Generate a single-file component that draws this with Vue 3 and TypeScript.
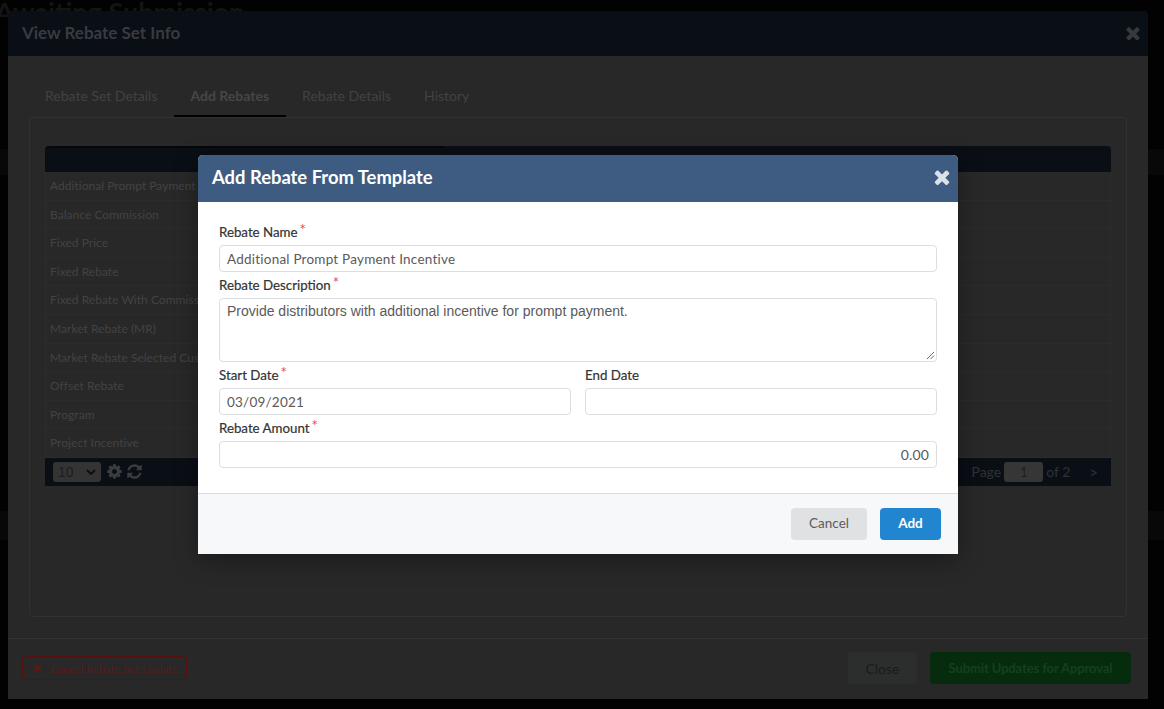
<script setup lang="ts">
const rows: string[] = [
  'Additional Prompt Payment Incentive',
  'Balance Commission',
  'Fixed Price',
  'Fixed Rebate',
  'Fixed Rebate With Commission',
  'Market Rebate (MR)',
  'Market Rebate Selected Customers',
  'Offset Rebate',
  'Program',
  'Project Incentive',
]
const timesPath =
  'M1490 1322q0 40-28 68l-136 136q-28 28-68 28t-68-28l-294-294-294 294q-28 28-68 28t-68-28l-136-136q-28-28-28-68t28-68l294-294-294-294q-28-28-28-68t28-68l136-136q28-28 68-28t68 28l294 294 294-294q28-28 68-28t68 28l136 136q28 28 28 68t-28 68l-294 294 294 294q28 28 28 68z'
const gearPath =
  'M1152 896q0-106-75-181t-181-75-181 75-75 181 75 181 181 75 181-75 75-181zm512-109v222q0 12-8 23t-20 13l-185 28q-19 54-39 91 35 50 107 138 10 12 10 25t-9 23q-27 37-99 108t-94 71q-12 0-26-9l-138-108q-44 23-91 38-16 136-29 186-7 28-36 28h-222q-14 0-24.500-8.500t-11.500-21.500l-28-184q-49-16-90-37l-141 107q-10 9-25 9-14 0-25-11-126-114-165-168-7-10-7-23 0-12 8-23 15-21 51-66.500t54-70.500q-27-50-41-99l-183-27q-13-2-21-12.500t-8-23.500v-222q0-12 8-23t19-13l186-28q14-46 39-92-40-57-107-138-10-12-10-24 0-10 9-23 26-36 98.500-107.500t94.500-71.500q13 0 26 10l138 107q44-23 91-38 16-136 29-186 7-28 36-28h222q14 0 24.500 8.500t11.500 21.500l28 184q49 16 90 37l142-107q9-9 24-9 13 0 25 10 129 119 165 170 7 8 7 22 0 12-8 23-15 21-51 66.500t-54 70.500q26 50 41 98l183 28q13 2 21 12.500t8 23.500z'
const refreshPath =
  'M1639 1056q0 5-1 7-64 268-268 434.500t-478 166.500q-146 0-282.500-55t-243.500-157l-129 129q-19 19-45 19t-45-19-19-45v-448q0-26 19-45t45-19h448q26 0 45 19t19 45-19 45l-137 137q71 66 161 102t187 36q134 0 250-65t186-179q11-17 53-117 8-23 30-23h192q13 0 22.500 9.500t9.500 22.500zm25-800v448q0 26-19 45t-45 19h-448q-26 0-45-19t-19-45 19-45l138-138q-148-137-349-137-134 0-250 65t-186 179q-11 17-53 117-8 23-30 23h-199q-13 0-22.500-9.500t-9.500-22.500v-7q65-268 270-434.500t480-166.500q146 0 284 55.500t245 156.500l130-129q19-19 45-19t45 19 19 45z'
</script>

<template>
  <div class="page">
    <div class="behind-title">Awaiting Submission</div>
    <div class="behind-band band-a"></div>
    <div class="behind-band band-b"></div>

    <section class="outer">
      <header class="outer-head">
        <h2>View Rebate Set Info</h2>
        <svg class="outer-x" viewBox="0 0 1792 1792"><path :d="timesPath" /></svg>
      </header>
      <div class="outer-body">
        <nav class="tabs">
          <span class="tab">Rebate Set Details</span>
          <span class="tab active">Add Rebates</span>
          <span class="tab">Rebate Details</span>
          <span class="tab">History</span>
        </nav>
        <div class="card">
          <div class="grid">
            <div class="grid-head"></div>
            <div v-for="r in rows" :key="r" class="grid-row">{{ r }}</div>
            <div class="grid-foot">
              <div class="foot-left">
                <span class="pagesize">10<svg viewBox="0 0 10 6"><path d="M1 1l4 4 4-4" /></svg></span>
                <svg class="ficon gear" viewBox="0 0 1792 1792"><path :d="gearPath" /></svg>
                <svg class="ficon" viewBox="0 0 1792 1792"><path :d="refreshPath" /></svg>
              </div>
              <div class="foot-right">
                <span>Page</span><span class="pagebox">1</span><span>of 2</span><span class="next">&gt;</span>
              </div>
            </div>
          </div>
        </div>
      </div>
      <footer class="outer-foot">
        <button class="btn-cancel-set">
          <svg viewBox="0 0 1792 1792"><path :d="timesPath" /></svg><span>Cancel Rebate Set Update</span>
        </button>
        <div class="foot-actions">
          <button class="btn-close">Close</button>
          <button class="btn-submit">Submit Updates for Approval</button>
        </div>
      </footer>
    </section>

    <section class="modal">
      <header class="modal-head">
        <h3>Add Rebate From Template</h3>
        <svg class="modal-x" viewBox="0 0 1792 1792"><path :d="timesPath" /></svg>
      </header>
      <div class="modal-body">
        <label class="lbl">Rebate Name<sup>*</sup></label>
        <div class="inp">Additional Prompt Payment Incentive</div>
        <label class="lbl">Rebate Description<sup>*</sup></label>
        <div class="inp area">
          Provide distributors with additional incentive for prompt payment.
          <svg class="grip" viewBox="0 0 10 10"><path d="M9 1L1 9M9 5L5 9" /></svg>
        </div>
        <div class="two">
          <div>
            <label class="lbl">Start Date<sup>*</sup></label>
            <div class="inp">03/09/2021</div>
          </div>
          <div>
            <label class="lbl">End Date</label>
            <div class="inp"></div>
          </div>
        </div>
        <label class="lbl">Rebate Amount<sup>*</sup></label>
        <div class="inp right">0.00</div>
      </div>
      <footer class="modal-foot">
        <button class="btn-cancel">Cancel</button>
        <button class="btn-add">Add</button>
      </footer>
    </section>
  </div>
</template>

<style>
html, body { margin: 0; background: #000; overflow: hidden; }
</style>

<style scoped>
* { box-sizing: border-box; }
.page {
  position: relative;
  width: 1164px;
  height: 709px;
  background: #020202;
  overflow: hidden;
  font-family: Lato, sans-serif;
}
.behind-title {
  position: absolute;
  left: -5px;
  top: -5px;
  font-size: 27px;
  font-weight: 700;
  color: #141414;
  white-space: nowrap;
}
.behind-band { position: absolute; left: 0; width: 1164px; background: #080808; }
.band-a { top: 149px; height: 26px; }
.band-b { top: 511px; height: 29px; }

.outer {
  position: absolute;
  left: 8px;
  top: 11px;
  width: 1140px;
  height: 688px;
  display: flex;
  flex-direction: column;
  background: #282828;
  border-radius: 5px 5px 0 0;
}
.outer-head {
  height: 45px;
  flex: none;
  background: #0a0e15;
  border-radius: 5px 5px 0 0;
  display: flex;
  align-items: center;
  justify-content: space-between;
  padding: 0 5px 2px 14px;
}
.outer-head h2 { margin: 0; font-size: 17px; font-weight: 700; color: #383b40; }
.outer-x { width: 20px; height: 20px; fill: #37393c; }
.outer-body { flex: 1; padding: 61px 21px 21px; position: relative; }
.tabs { position: absolute; left: 20.5px; top: 27px; display: flex; height: 34px; }
.tab {
  padding: 0 16.5px;
  font-size: 14px;
  line-height: 26px;
  color: #424242;
  height: 34px;
}
.tab.active { color: #464646; font-weight: 700; border-bottom: 2px solid #000; }
.card {
  height: 500px;
  border: 1px solid #313131;
  border-radius: 4px;
  padding: 28px 15px 0;
}
.grid-head {
  height: 26px;
  background: linear-gradient(#05070c, #05070c) top left / 399px 2px no-repeat, #0a0e15;
  border-radius: 4px 4px 0 0;
}
.grid-row {
  height: 28.6px;
  padding-left: 4px;
  font-size: 12px;
  letter-spacing: 0.03px;
  line-height: 28px;
  color: #434343;
  border-bottom: 1px solid #2c2c2c;
  border-left: 1px solid #2c2c2c;
  border-right: 1px solid #2c2c2c;
}
.grid-foot {
  height: 28px;
  background: #0a0e15;
  display: flex;
  align-items: center;
  justify-content: space-between;
  padding: 0 13px 0 8px;
  color: #303236;
  font-size: 14px;
}
.foot-left, .foot-right { display: flex; align-items: center; }
.foot-left { gap: 3px; }
.pagesize {
  width: 48px;
  height: 20px;
  background: #343434;
  border-radius: 3px;
  color: #1e1e1e;
  font: 14px "Liberation Sans", sans-serif;
  line-height: 20px;
  padding-left: 5px;
  position: relative;
}
.pagesize svg {
  position: absolute;
  right: 5px;
  top: 7px;
  width: 10px;
  height: 6px;
  fill: none;
  stroke: #0f0f0f;
  stroke-width: 2;
}
.ficon { width: 17px; height: 17px; fill: #3a3c3e; }
.gear { margin-left: 2px; }
.pagebox {
  width: 39px;
  height: 20px;
  margin: 0 3px;
  background: #363636;
  border-radius: 3px;
  text-align: center;
  line-height: 20px;
  color: #1e1e1e;
  font-size: 13px;
}
.next { margin-left: 19px; font-size: 15px; }

.outer-foot {
  height: 61px;
  flex: none;
  border-top: 1px solid #323232;
  display: flex;
  align-items: center;
  justify-content: space-between;
  padding: 0 17px 2px 14px;
}
.btn-cancel-set {
  height: 24px;
  width: 165px;
  background: transparent;
  border: 1px solid #580f10;
  border-radius: 4px;
  color: #561a1b;
  font: 11.5px Lato, sans-serif;
  letter-spacing: -0.15px;
  display: flex;
  align-items: center;
  padding: 0 0 0 9px;
  gap: 6px;
  white-space: nowrap;
}
.btn-cancel-set svg { width: 12px; height: 12px; fill: #561a1b; flex: none; }
.foot-actions { display: flex; gap: 13px; }
.btn-close {
  width: 69px;
  height: 32px;
  background: #2c2e2e;
  border: 0;
  border-radius: 4px;
  color: #1a1a1a;
  font: 14px Lato, sans-serif;
}
.btn-submit {
  width: 201px;
  height: 32px;
  background: #062c0d;
  border: 0;
  border-radius: 4px;
  color: #15401d;
  font: 700 13px Lato, sans-serif;
  letter-spacing: -0.1px;
}

.modal {
  position: absolute;
  left: 198px;
  top: 155px;
  width: 760px;
  height: 399px;
  display: flex;
  flex-direction: column;
  background: #fff;
  border-radius: 5px 5px 0 0;
  box-shadow: 0 6px 24px rgba(0, 0, 0, 0.35);
}
.modal-head {
  height: 47px;
  flex: none;
  background: #3e5c82;
  border-radius: 5px 5px 0 0;
  display: flex;
  align-items: center;
  justify-content: space-between;
  padding: 0 4px 3px 14px;
}
.modal-head h3 { margin: 0; font-size: 18.4px; font-weight: 700; color: #fff; }
.modal-x { width: 22px; height: 22px; fill: #dbe1e8; margin-right: 1px; }
.modal-body { flex: 1; padding: 17px 21px 0; }
.lbl {
  display: block;
  height: 26px;
  line-height: 26px;
  font-size: 13.3px;
  color: #333;
  -webkit-text-stroke: 0.2px #333;
}
.lbl sup {
  color: #e5494d;
  font-size: 15px;
  line-height: 0;
  margin-left: 2px;
  vertical-align: 2px;
  -webkit-text-stroke: 0;
}
.inp {
  height: 27px;
  border: 1px solid #dcdee0;
  border-radius: 4px;
  padding: 0 7px;
  line-height: 26px;
  font-size: 13.5px;
  color: #5a5a5a;
  letter-spacing: 0.22px;
}
.inp.area {
  height: 64px;
  position: relative;
  font: 14px/24px "Liberation Sans", sans-serif;
  letter-spacing: 0;
}
.grip {
  position: absolute;
  right: 1px;
  bottom: 1px;
  width: 9px;
  height: 9px;
  fill: none;
  stroke: #555;
  stroke-width: 1;
}
.inp.right { text-align: right; font-size: 14px; letter-spacing: 0.15px; }
.two { display: grid; grid-template-columns: 352px 352px; column-gap: 14px; }
.modal-foot {
  height: 61px;
  flex: none;
  background: #f7f8fa;
  border-top: 1px solid #d9dbdd;
  display: flex;
  align-items: center;
  justify-content: flex-end;
  gap: 13px;
  padding: 0 17px 0 0;
}
.btn-cancel {
  width: 76px;
  height: 32px;
  background: #e0e1e3;
  border: 0;
  border-radius: 4px;
  color: #5c5c5c;
  font: 13.5px Lato, sans-serif;
  padding: 0 0 2px;
}
.btn-add {
  width: 61px;
  height: 32px;
  background: #2185d0;
  border: 0;
  border-radius: 4px;
  color: #fff;
  font: 700 13.5px Lato, sans-serif;
  padding: 0 0 2px;
}
</style>
